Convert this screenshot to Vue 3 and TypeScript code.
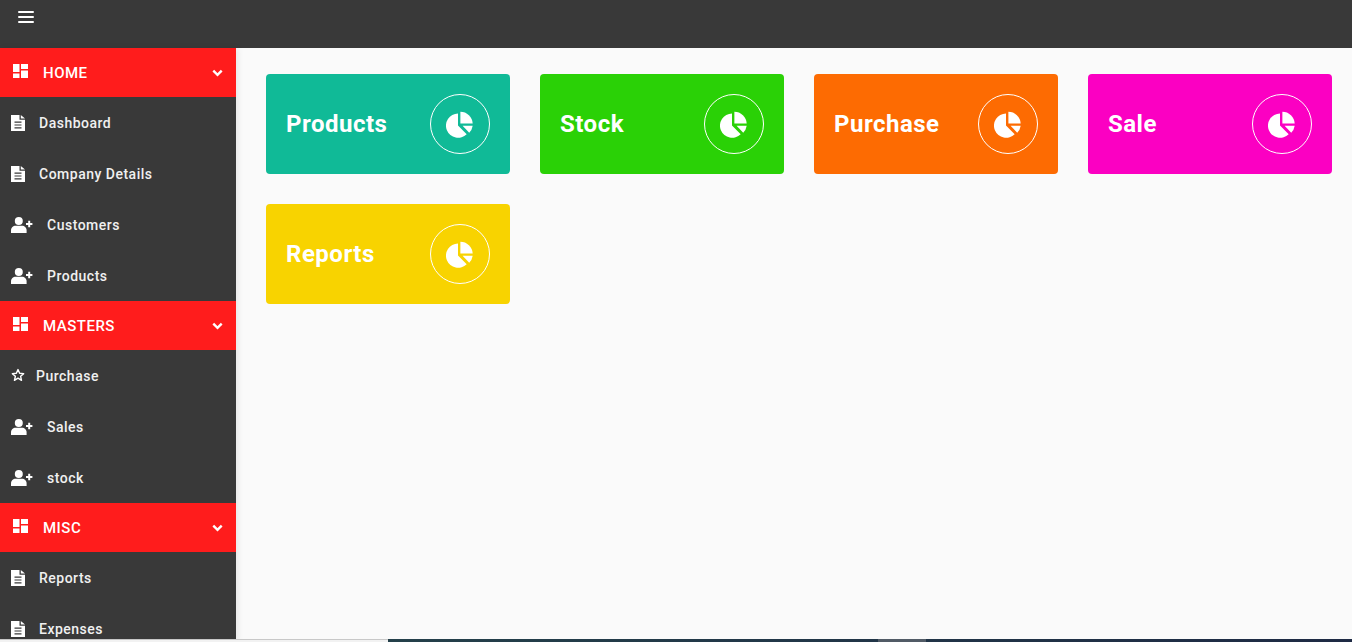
<script setup lang="ts">
type Item = { label: string; icon: 'doc' | 'user' | 'star' }
type Group = { title: string; items: Item[] }

const groups: Group[] = [
  {
    title: 'HOME',
    items: [
      { label: 'Dashboard', icon: 'doc' },
      { label: 'Company Details', icon: 'doc' },
      { label: 'Customers', icon: 'user' },
      { label: 'Products', icon: 'user' },
    ],
  },
  {
    title: 'MASTERS',
    items: [
      { label: 'Purchase', icon: 'star' },
      { label: 'Sales', icon: 'user' },
      { label: 'stock', icon: 'user' },
    ],
  },
  {
    title: 'MISC',
    items: [
      { label: 'Reports', icon: 'doc' },
      { label: 'Expenses', icon: 'doc' },
    ],
  },
]

const cards = [
  { label: 'Products', color: '#10ba97' },
  { label: 'Stock', color: '#2ad106' },
  { label: 'Purchase', color: '#fd6b02' },
  { label: 'Sale', color: '#fb00c2' },
  { label: 'Reports', color: '#f8d300' },
]
</script>

<template>
  <div class="page">
    <header class="topbar">
      <svg class="burger" width="16" height="12" viewBox="0 0 16 12">
        <rect x="0" y="0" width="16" height="2" rx="1" />
        <rect x="0" y="5" width="16" height="2" rx="1" />
        <rect x="0" y="10" width="16" height="2" rx="1" />
      </svg>
    </header>
    <div class="body">
      <aside class="sidebar">
        <section v-for="g in groups" :key="g.title">
          <div class="group-head">
            <svg class="dash" width="15" height="14" viewBox="0 0 15 14">
              <rect x="0" y="0" width="6.5" height="8" />
              <rect x="8" y="0" width="7" height="5" />
              <rect x="0" y="9.5" width="6.5" height="4.5" />
              <rect x="8" y="6.5" width="7" height="7.5" />
            </svg>
            <span class="group-title">{{ g.title }}</span>
            <svg class="chev" width="11" height="8" viewBox="0 0 11 8">
              <path d="M1.3 1.6 5.5 5.8 9.7 1.6" fill="none" stroke="#fff" stroke-width="2.4" />
            </svg>
          </div>
          <div v-for="it in g.items" :key="it.label" class="item" :class="'item-' + it.icon">
            <svg v-if="it.icon === 'doc'" class="ic-doc" width="14" height="16" viewBox="0 0 14 16">
              <path fill-rule="evenodd" d="M0 0H8.5V4.8H14V16H0ZM9.8 0 14 3.6H9.8ZM3.5 6.6V7.8H10.5V6.6ZM3.5 9.4V10.6H10.5V9.4ZM3.5 12.2V13.4H10.5V12.2Z" />
            </svg>
            <svg v-else-if="it.icon === 'user'" class="ic-user" width="22" height="16" viewBox="0 0 22 16">
              <circle cx="7.8" cy="4" r="4" />
              <path d="M0 16V13.4C0 10.6 2.2 8.8 4.6 8.8H11C13.4 8.8 15.6 10.6 15.6 13.4V16Z" />
              <path d="M17.2 3.8H19.2V6H21.4V8H19.2V10.2H17.2V8H15V6H17.2Z" />
            </svg>
            <svg v-else class="ic-star" width="14" height="14" viewBox="0 0 24 24">
              <path d="M12 2.6 14.8 9l6.9.7-5.2 4.6 1.5 6.8L12 17.5 5.9 21.1l1.6-6.8L2.3 9.7 9.2 9Z" fill="none" stroke="#fff" stroke-width="2.4" stroke-linejoin="round" />
            </svg>
            <span>{{ it.label }}</span>
          </div>
        </section>
      </aside>
      <main class="content">
        <div v-for="c in cards" :key="c.label" class="card" :style="{ background: c.color }">
          <span class="card-title">{{ c.label }}</span>
          <span class="ring">
            <svg width="28" height="28" viewBox="0 0 28 28">
              <path d="M12 3.4V15.6L20.7 24.3A12.2 12.2 0 1 1 12 3.4Z" fill="#fff" />
              <path d="M14.4 1.8A12.3 12.3 0 0 1 26.7 13.4H14.4Z" fill="#fff" />
              <path d="M16.6 15.8H26.7A12.3 12.3 0 0 1 23.2 22.8Z" fill="#fff" />
            </svg>
          </span>
        </div>
      </main>
    </div>
    <div class="hscroll">
      <div class="hscroll-left"></div>
      <div class="hscroll-track"><div class="hscroll-thumb"></div></div>
    </div>
  </div>
</template>

<style>
html, body { margin: 0; overflow: hidden; }
</style>

<style scoped>
.page {
  width: 1352px;
  height: 642px;
  overflow: hidden;
  display: flex;
  flex-direction: column;
  position: relative;
  font-family: Roboto, "Liberation Sans", sans-serif;
  background: #fafafa;
}
.topbar {
  height: 48px;
  flex: none;
  background: #393939;
  box-sizing: border-box;
  padding: 11px 0 0 18px;
}
.burger { display: block; fill: #fff; }
.body { flex: 1; display: flex; min-height: 0; }
.sidebar {
  width: 236px;
  flex: none;
  background: #393939;
  overflow: hidden;
  box-shadow: 2px 0 6px rgba(0, 0, 0, 0.08);
}
.group-head {
  height: 49px;
  background: #ff1c1c;
  display: flex;
  align-items: center;
  color: #fff;
  padding: 0 13px 0 13px;
  font-size: 15px;
  font-weight: 500;
  letter-spacing: 0.5px;
}
.dash { fill: #fff; flex: none; margin-top: -3px; }
.group-title { margin-left: 15px; flex: 1; }
.chev { flex: none; }
.item {
  height: 51px;
  display: flex;
  align-items: center;
  color: #f0f0f0;
  font-size: 14px;
  font-weight: 500;
  letter-spacing: 0.5px;
  padding-left: 11px;
  box-sizing: border-box;
}
.item svg { flex: none; fill: #fff; }
.ic-doc { margin-right: 14px; }
.ic-user { margin-right: 14px; }
.ic-star { margin-right: 11px; margin-top: -2px; }
.content {
  flex: 1;
  display: flex;
  flex-wrap: wrap;
  align-content: flex-start;
  gap: 30px;
  padding: 26px 20px 0 30px;
}
.card {
  width: 244px;
  height: 100px;
  border-radius: 4px;
  display: flex;
  align-items: center;
  justify-content: space-between;
  padding: 0 20px;
  box-sizing: border-box;
  color: #fff;
}
.card-title {
  font-size: 24px;
  font-weight: 700;
  letter-spacing: 0.5px;
}
.ring {
  width: 60px;
  height: 60px;
  border: 1px solid #fff;
  border-radius: 50%;
  box-sizing: border-box;
  display: flex;
  align-items: center;
  justify-content: center;
}
.hscroll {
  position: absolute;
  left: 0;
  right: 0;
  bottom: 0;
  height: 3px;
  display: flex;
}
.hscroll-left {
  width: 388px;
  flex: none;
  background: #f2f2f2;
  border-top: 1px solid #c8c8c8;
  box-sizing: border-box;
}
.hscroll-track {
  flex: 1;
  position: relative;
  background: linear-gradient(90deg, #24404a, #1e2a44);
}
.hscroll-thumb {
  position: absolute;
  left: 490px;
  width: 48px;
  top: 0;
  bottom: 0;
  background: #515b66;
}
</style>
